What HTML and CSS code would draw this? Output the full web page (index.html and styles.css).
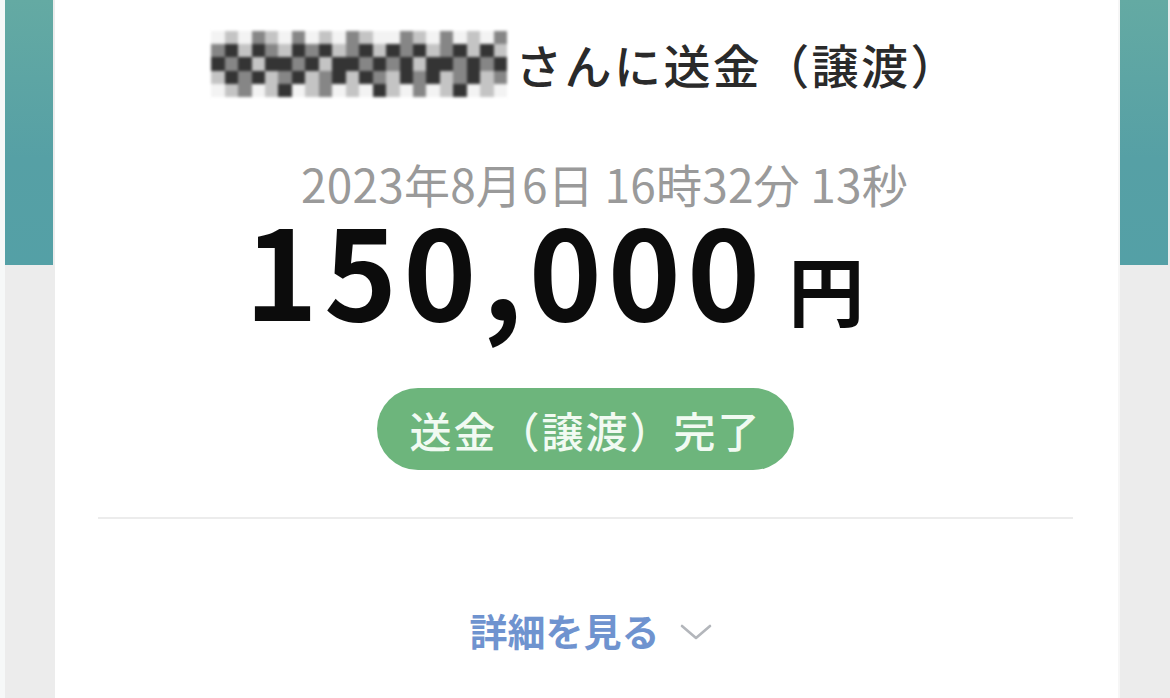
FILE: index.html
```html
<!DOCTYPE html>
<html lang="ja">
<head>
<meta charset="utf-8">
<title>送金（譲渡）完了</title>
<link rel="stylesheet" href="styles.css">
</head>
<body>
<div class="page">
  <div class="gutter gutter-left"><div class="teal"></div></div>
  <main class="card">
    <h1 class="title">
      <span class="mosaic" aria-hidden="true">
        <i class="a"></i><i class="b"></i><i class="a"></i><i class="c"></i><i class="b"></i><i class="a"></i><i class="c"></i><i class="a"></i><i class="b"></i><i class="a"></i><i class="c"></i><i class="b"></i><i class="a"></i><i class="a"></i><i class="c"></i><i class="b"></i><i class="a"></i><i class="c"></i><i class="a"></i><i class="b"></i><i class="a"></i><i class="c"></i>
        <i class="c"></i><i class="d"></i><i class="b"></i><i class="d"></i><i class="c"></i><i class="b"></i><i class="d"></i><i class="c"></i><i class="d"></i><i class="b"></i><i class="c"></i><i class="d"></i><i class="b"></i><i class="d"></i><i class="c"></i><i class="d"></i><i class="b"></i><i class="c"></i><i class="d"></i><i class="b"></i><i class="d"></i><i class="b"></i>
        <i class="d"></i><i class="c"></i><i class="d"></i><i class="b"></i><i class="d"></i><i class="d"></i><i class="c"></i><i class="d"></i><i class="b"></i><i class="d"></i><i class="d"></i><i class="c"></i><i class="d"></i><i class="c"></i><i class="d"></i><i class="b"></i><i class="d"></i><i class="d"></i><i class="c"></i><i class="d"></i><i class="c"></i><i class="d"></i>
        <i class="b"></i><i class="d"></i><i class="c"></i><i class="d"></i><i class="b"></i><i class="c"></i><i class="d"></i><i class="b"></i><i class="c"></i><i class="d"></i><i class="b"></i><i class="d"></i><i class="c"></i><i class="b"></i><i class="d"></i><i class="c"></i><i class="d"></i><i class="b"></i><i class="c"></i><i class="d"></i><i class="b"></i><i class="c"></i>
        <i class="a"></i><i class="b"></i><i class="c"></i><i class="a"></i><i class="b"></i><i class="d"></i><i class="a"></i><i class="b"></i><i class="c"></i><i class="a"></i><i class="b"></i><i class="a"></i><i class="d"></i><i class="b"></i><i class="a"></i><i class="c"></i><i class="a"></i><i class="b"></i><i class="d"></i><i class="a"></i><i class="b"></i><i class="a"></i>
      </span><span class="title-text">さんに送金（譲渡）</span>
    </h1>
    <p class="date">2023年8月6日 16時32分 13秒</p>
    <p class="amount"><span class="num">150,000</span><span class="yen">円</span></p>
    <div class="status"><span class="pill">送金（譲渡）完了</span></div>
    <hr class="divider">
    <div class="more">
      <span class="more-text">詳細を見る</span>
      <svg class="chev" width="32" height="18" viewBox="0 0 32 18" aria-hidden="true"><polyline points="2,3 16,15 30,3" fill="none" stroke="#b3b6bb" stroke-width="2.6" stroke-linecap="round" stroke-linejoin="round"/></svg>
    </div>
  </main>
  <div class="gutter gutter-right"><div class="teal"></div></div>
</div>
</body>
</html>
```

FILE: styles.css
```css
* { box-sizing: border-box; }
html, body {
  margin: 0;
  padding: 0;
  height: 100%;
}
body {
  background: #efefef;
  font-family: "Noto Sans CJK JP", "Noto Sans", sans-serif;
  overflow: hidden;
}
.page {
  display: flex;
  height: 698px;
  width: 1170px;
}
.gutter {
  flex: 0 0 auto;
}
.gutter-left {
  width: 55px;
  padding-left: 5px;
  padding-right: 2px;
  background: linear-gradient(to right, #f6f8f8 0 5px, #ececec 5px);
}
.gutter-right {
  width: 52px;
  padding-left: 2px;
  padding-right: 2px;
  background: linear-gradient(to right, #f6f6f6 0 2px, #ececec 2px);
}
.teal {
  height: 265px;
  background: linear-gradient(to bottom, #64aaa3, #56a0a5 60%, #54a0a6);
}
.card {
  flex: 1 1 auto;
  background: #ffffff;
  display: flex;
  flex-direction: column;
  align-items: center;
  padding: 31px 45px 0 43px;
}
.title {
  margin: 0;
  display: flex;
  align-items: center;
  font-size: 47px;
  font-weight: 500;
  color: #2a2a2a;
  line-height: 66px;
}
.title-text { letter-spacing: 2.4px; }
.mosaic {
  display: grid;
  grid-template-columns: repeat(22, 1fr);
  grid-template-rows: repeat(5, 1fr);
  width: 296px;
  height: 66px;
  margin-right: 8px;
  filter: blur(1.6px);
}
.mosaic i { display: block; }
.mosaic .a { background: #f3f3f3; }
.mosaic .b { background: #c4c4c4; }
.mosaic .c { background: #868686; }
.mosaic .d { background: #343434; }
.date {
  margin: 58px 0 0 38px;
  font-size: 46px;
  line-height: 56px;
  color: #9a9a9a;
  font-weight: 400;
  letter-spacing: 0.2px;
}
.amount {
  margin: 6px 62px 0 0;
  display: flex;
  align-items: baseline;
  color: #0c0c0c;
  line-height: 100px;
}
.num {
  font-size: 124px;
  font-weight: 700;
  letter-spacing: 6px;
}
.yen {
  font-size: 76px;
  font-weight: 700;
  margin-left: 22px;
}
.status {
  margin-top: 50px;
}
.pill {
  display: inline-flex;
  align-items: center;
  justify-content: center;
  width: 417px;
  height: 82px;
  border-radius: 41px;
  background: #6db57c;
  color: #f1faf2;
  font-size: 42px;
  font-weight: 500;
  letter-spacing: 2px;
}
.divider {
  align-self: stretch;
  border: 0;
  height: 2px;
  background: #ececec;
  margin: 47px 0 0 0;
}
.more {
  margin: 88px 0 0 10px;
  display: flex;
  align-items: center;
  gap: 20px;
}
.more-text {
  font-size: 38px;
  font-weight: 700;
  color: #6f93cf;
  line-height: 46px;
}
.chev { margin-top: 4px; }
```
